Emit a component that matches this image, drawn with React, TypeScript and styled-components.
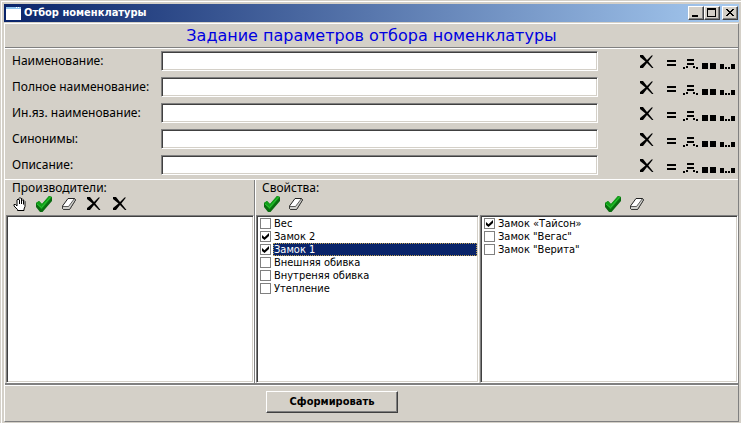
import React, { useState } from "react";
import styled, { createGlobalStyle, css } from "styled-components";

const face = "#d4d0c8";
const shadow = "#808080";
const dark = "#404040";
const light = "#ffffff";

const GlobalStyle = createGlobalStyle`
  *, *::before, *::after { box-sizing: border-box; }
  body {
    margin: 0;
    background: ${face};
    color: #000;
    font-family: "DejaVu Sans Condensed", "DejaVu Sans", sans-serif;
    font-size: 11px;
  }
  button, input { font: inherit; color: inherit; }
`;

const sunken = css`
  border: 1px solid;
  border-color: ${shadow} ${light} ${light} ${shadow};
  box-shadow: inset 1px 1px 0 ${dark}, inset -1px -1px 0 ${face};
`;

const Window = styled.main`
  display: flex;
  flex-direction: column;
  min-height: 100vh;
  padding: 4px 2px 1px 4px;
  background: ${face};
  box-shadow: inset 1px 1px 0 ${face}, inset 2px 2px 0 ${light};
`;

const TitleBar = styled.header`
  display: flex;
  align-items: center;
  height: 18px;
  padding: 0 1px 0 2px;
  background: linear-gradient(90deg, #0a246a, #a6caf0);
  color: #fff;
`;

const Caption = styled.span`
  flex: 1;
  margin-left: 3px;
  font-weight: bold;
  line-height: 18px;
`;

const CaptionButton = styled.button<{ $apart?: boolean }>`
  display: flex;
  width: 16px;
  height: 14px;
  margin-left: ${(p) => (p.$apart ? 2 : 0)}px;
  padding: 0;
  border: 1px solid;
  border-color: ${light} ${dark} ${dark} ${light};
  background: ${face};
  box-shadow: inset -1px -1px 0 ${shadow};
`;

const Client = styled.div`
  display: flex;
  flex: 1;
  flex-direction: column;
  margin-top: 1px;
  border: 1px solid;
  border-color: ${light} ${shadow} ${shadow} ${light};
`;

const Heading = styled.h1`
  margin: 0;
  height: 24px;
  border-bottom: 1px solid ${shadow};
  color: #0000e0;
  font-family: "DejaVu Sans", sans-serif;
  font-size: 16px;
  font-weight: normal;
  line-height: 24px;
  text-align: center;
`;

const Filters = styled.form`
  display: flex;
  flex-direction: column;
  gap: 6px;
  padding: 2px 2px 4px 7px;
  border-top: 1px solid ${light};
`;

const FilterRow = styled.div`
  display: grid;
  grid-template-columns: 149px minmax(0, 1fr) auto;
  align-items: center;
  height: 20px;
`;

const FilterLabel = styled.label`
  font-family: "Noto Sans", sans-serif;
  font-size: 12px;
  line-height: 20px;
  white-space: nowrap;
`;

const TextBox = styled.input`
  width: 100%;
  height: 20px;
  padding: 0 3px;
  border-radius: 0;
  background: #fff;
  outline: none;
  ${sunken}
`;

const Operators = styled.div`
  display: flex;
  padding: 2px 0 0 40px;
`;

const IconButton = styled.button<{ $wide?: number; $after?: number }>`
  display: flex;
  justify-content: center;
  align-items: center;
  width: ${(p) => p.$wide ?? 18}px;
  height: 18px;
  margin: 0 ${(p) => p.$after ?? 0}px 0 0;
  padding: 0;
  border: 0;
  background: none;
`;

const Panels = styled.div`
  display: grid;
  grid-template-columns: 250px 224px minmax(0, 1fr);
  flex: 1;
  border-top: 1px solid ${light};
  border-bottom: 2px solid ${shadow};
`;

const Panel = styled.section<{ $divided?: boolean }>`
  display: flex;
  flex-direction: column;
  min-width: 0;
  padding-left: 1px;
  ${(p) =>
    p.$divided &&
    css`
      border-right: 1px solid ${shadow};
      box-shadow: 1px 0 0 ${light};
    `}
`;

const PanelTitle = styled.h2`
  height: 15px;
  margin: 0;
  padding-left: 6px;
  font-family: "Noto Sans", sans-serif;
  font-size: 12px;
  font-weight: normal;
  line-height: 15px;
`;

const ToolBar = styled.div<{ $end?: boolean }>`
  display: flex;
  gap: 4px;
  height: 20px;
  ${(p) =>
    p.$end
      ? css`
          justify-content: flex-end;
          padding-right: 92px;
        `
      : css`
          padding-left: 5px;
        `}
`;

const ListBox = styled.ul`
  flex: 1;
  min-height: 120px;
  margin: 0;
  padding: 1px;
  background: #fff;
  list-style: none;
  ${sunken}
`;

const Item = styled.label`
  display: flex;
  align-items: center;
  gap: 2px;
  height: 13px;
  padding-left: 2px;
`;

const Tick = styled.input`
  display: grid;
  place-items: center;
  flex: none;
  width: 11px;
  height: 11px;
  margin: 0;
  border: 1px solid ${shadow};
  background: #fff;
  appearance: none;

  &:checked::after {
    content: "";
    width: 7px;
    height: 7px;
    background: #000;
    clip-path: polygon(0 29%, 36% 60%, 100% 0, 100% 43%, 36% 100%, 0 71%);
  }
`;

const ItemText = styled.span<{ $selected?: boolean }>`
  flex: 1;
  height: 13px;
  padding-left: 1px;
  line-height: 13px;
  white-space: nowrap;
  ${(p) =>
    p.$selected &&
    css`
      outline: 1px dotted #c0a050;
      outline-offset: -1px;
      background: #0a246a;
      color: #fff;
    `}
`;

const Footer = styled.footer`
  height: 36px;
  padding: 5px 0 0 261px;
  border-top: 1px solid ${light};
`;

const PushButton = styled.button`
  width: 132px;
  height: 22px;
  padding: 0;
  border: 1px solid;
  border-color: ${light} ${dark} ${dark} ${light};
  background: ${face};
  box-shadow: inset -1px -1px 0 ${shadow};
  font-weight: bold;
  line-height: 20px;
`;

const Cross = () => (
  <svg width="14" height="14" viewBox="0 0 14 14">
    <path d="M0 0h3L7 5 11.500 0.500h1.500L8.300 6.500 13.500 13h-1.500L7 8 3 13H0v-2L5.500 6.500 0 2z" />
  </svg>
);

const Equal = () => (
  <svg width="18" height="18" shapeRendering="crispEdges">
    <path d="M3 7h9v2H3zM3 11h9v2H3z" />
  </svg>
);

const Contains = () => (
  <svg width="18" height="18" shapeRendering="crispEdges">
    <path d="M5 6h7v2H5zM5 10h7v2H5zM1 14h2v2H1zM4 13h2v2H4zM11 13h2v2h-2zM14 14h2v2h-2z" />
  </svg>
);

const Blocks = () => (
  <svg width="18" height="18" shapeRendering="crispEdges">
    <path d="M2 10h6v6H2zM10 10h6v6h-6z" />
  </svg>
);

const Ends = () => (
  <svg width="18" height="18" shapeRendering="crispEdges">
    <path d="M2 11h4v5H2zM7 14h2v2H7zM10 14h2v2h-2zM13 11h4v5h-4z" />
  </svg>
);

const Hand = () => (
  <svg width="14" height="15" viewBox="0 0 14 15">
    <path
      d="M4.500 13.500v-1L1 9V7.500h1.500L4 9V3l1-1 1 1V1.500l1-1 1 1V2l1-.5 1 1V4l1-.5 1 1v5l-1 2.500v1.500z"
      fill="#fff"
      stroke="#000"
    />
    <path d="M6.500 3v4M8.500 2v5M10.500 4v3.500" stroke="#000" />
  </svg>
);

const Check = () => (
  <svg width="18" height="18" viewBox="0 0 18 18">
    <path d="M1 8l3-2 3 3 7-8 3 1v4L7.500 17H5L1 12z" fill="#0a6b10" />
    <path d="M1 8l3-2 3 3 7-8 3 1L6.500 14.500z" fill="#12a01a" />
    <path d="M2 9l4.500 3.500L15.500 2" fill="none" stroke="#2fc236" />
  </svg>
);

const Eraser = () => (
  <svg width="16" height="14" viewBox="0 0 16 14">
    <path d="M1.500 9l5.500-7.500h6.500l1 1.500-6 9.500h-6l-1-1z" fill="#fff" stroke="#222" />
    <path d="M1.500 9.500H7.500l6-8 1 1.500-6 9.500h-6l-1-1z" fill="#d0d0cc" stroke="#222" strokeWidth=".7" />
  </svg>
);

const AppIcon = () => (
  <svg width="15" height="13" shapeRendering="crispEdges">
    <path d="M0 0h15v13H0z" fill="#fff" />
    <path d="M0 0h15v2H0z" fill="#8fc4ee" />
    <path d="M10 0h1v1h-1zM12 0h1v1h-1z" fill="#fff" />
  </svg>
);

const filters = [
  "Наименование:",
  "Полное наименование:",
  "Ин.яз. наименование:",
  "Синонимы:",
  "Описание:",
];

type Entry = { text: string; checked?: boolean };

const properties: Entry[] = [
  { text: "Вес" },
  { text: "Замок 2", checked: true },
  { text: "Замок 1", checked: true },
  { text: "Внешняя обивка" },
  { text: "Внутреняя обивка" },
  { text: "Утепление" },
];

const values: Entry[] = [
  { text: "Замок «Тайсон»", checked: true },
  { text: 'Замок "Вегас"' },
  { text: 'Замок "Верита"' },
];

function CheckList({ entries, initial, label }: { entries: Entry[]; initial?: number; label: string }) {
  const [selected, setSelected] = useState(initial);
  return (
    <ListBox aria-label={label}>
      {entries.map((entry, i) => (
        <li key={entry.text} onClick={() => setSelected(i)}>
          <Item>
            <Tick type="checkbox" defaultChecked={entry.checked} />
            <ItemText $selected={selected === i}>{entry.text}</ItemText>
          </Item>
        </li>
      ))}
    </ListBox>
  );
}

export default function App() {
  return (
    <>
      <GlobalStyle />
      <Window>
        <TitleBar>
          <AppIcon />
          <Caption>Отбор номенклатуры</Caption>
          <CaptionButton aria-label="Свернуть">
            <svg width="14" height="12" shapeRendering="crispEdges">
              <path d="M3 8h6v2H3z" />
            </svg>
          </CaptionButton>
          <CaptionButton aria-label="Развернуть">
            <svg width="14" height="12" shapeRendering="crispEdges">
              <path d="M2 1h9v9H2zM3 3v6h7V3z" fillRule="evenodd" />
            </svg>
          </CaptionButton>
          <CaptionButton $apart aria-label="Закрыть">
            <svg width="14" height="12" shapeRendering="crispEdges">
              <path d="M3 2h2v1h1v1h2V3h1V2h2v1h-1v1H9v1H8v1h1v1h1v1h1v1H9V8H8V7H6v1H5v1H3V8h1V7h1V6h1V5H5V4H4V3H3z" />
            </svg>
          </CaptionButton>
        </TitleBar>
        <Client>
          <Heading>Задание параметров отбора номенклатуры</Heading>
          <Filters onSubmit={(e) => e.preventDefault()}>
            {filters.map((name, i) => (
              <FilterRow key={name}>
                <FilterLabel htmlFor={`filter-${i}`}>{name}</FilterLabel>
                <TextBox id={`filter-${i}`} type="text" />
                <Operators>
                  <IconButton type="button" $after={8} aria-label="Очистить"><Cross /></IconButton>
                  <IconButton type="button" aria-label="Равно"><Equal /></IconButton>
                  <IconButton type="button" aria-label="Содержит"><Contains /></IconButton>
                  <IconButton type="button" aria-label="Начинается"><Blocks /></IconButton>
                  <IconButton type="button" aria-label="Заканчивается"><Ends /></IconButton>
                </Operators>
              </FilterRow>
            ))}
          </Filters>
          <Panels>
            <Panel $divided>
              <PanelTitle>Производители:</PanelTitle>
              <ToolBar>
                <IconButton aria-label="Выбрать"><Hand /></IconButton>
                <IconButton $wide={22} aria-label="Отметить все"><Check /></IconButton>
                <IconButton $wide={20} aria-label="Снять отметки"><Eraser /></IconButton>
                <IconButton $wide={22} aria-label="Удалить"><Cross /></IconButton>
                <IconButton $wide={22} aria-label="Удалить все"><Cross /></IconButton>
              </ToolBar>
              <CheckList entries={[]} label="Производители" />
            </Panel>
            <Panel>
              <PanelTitle>Свойства:</PanelTitle>
              <ToolBar>
                <IconButton $wide={22} aria-label="Отметить все"><Check /></IconButton>
                <IconButton aria-label="Снять отметки"><Eraser /></IconButton>
              </ToolBar>
              <CheckList entries={properties} initial={2} label="Свойства" />
            </Panel>
            <Panel>
              <PanelTitle aria-hidden />
              <ToolBar $end>
                <IconButton $wide={22} aria-label="Отметить все"><Check /></IconButton>
                <IconButton aria-label="Снять отметки"><Eraser /></IconButton>
              </ToolBar>
              <CheckList entries={values} label="Значения" />
            </Panel>
          </Panels>
          <Footer>
            <PushButton type="button">Сформировать</PushButton>
          </Footer>
        </Client>
      </Window>
    </>
  );
}
